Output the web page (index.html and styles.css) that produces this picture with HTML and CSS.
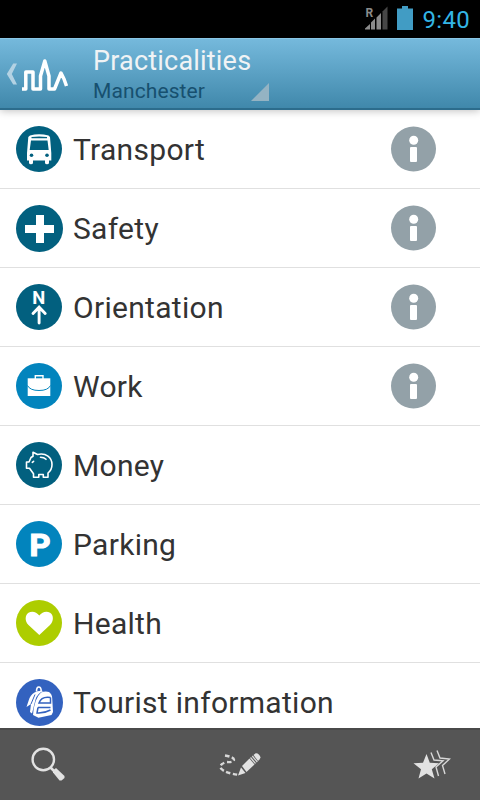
FILE: index.html
```html
<!DOCTYPE html>
<html lang="en">
<head>
    <meta charset="UTF-8">
    <meta name="viewport" content="width=device-width, initial-scale=1.0">
    <title>Practicalities | Manchester</title>
    <link rel="stylesheet" href="styles.css">
</head>
<body>
    <svg width="0" height="0" class="defs">
        <symbol id="info" viewBox="0 0 46 46">
            <circle cx="23.500" cy="23" r="22.500" fill="#93a1a8"/>
            <circle cx="23.700" cy="14.300" r="4.500" fill="#fff"/>
            <rect x="20" y="21" width="7" height="15" rx="1" fill="#fff"/>
        </symbol>
    </svg>

    <div class="status-bar">
        <svg class="signal" width="24" height="24" viewBox="0 0 24 24">
            <text x="0.5" y="11" class="roaming">R</text>
            <path d="M0 23.500v-1l5-4.500v5.500zM6 23.500v-7l4-4v11zM11.500 23.500V11.500l4.500-4.500v16.500z" fill="#8b8b8b"/>
            <path d="M17.500 23.500V5.500l5-5v23z" fill="#464646"/>
        </svg>
        <svg class="battery" width="16" height="24" viewBox="0 0 16 24">
            <path d="M0 2.500h5V0h6v2.500h5V24H0z" fill="#419cc4"/>
        </svg>
        <span class="clock">9:40</span>
    </div>

    <div class="header">
        <svg class="logo" width="64" height="40" viewBox="0 0 64 40">
            <path d="M11 11.500H7.200L.8 22l6.400 10.500H11L5.800 22z" fill="#b3d2e3"/>
            <path d="M16 37h3.800V20h7.200v17h7.500V24L38.800 9 43 24v13h5.500L55 21l3 6 2.500 7" fill="none" stroke="#fff" stroke-width="3.500" stroke-linejoin="round"/>
        </svg>
        <div class="titles">
            <div class="title">Practicalities</div>
            <div class="subtitle">Manchester</div>
        </div>
        <svg class="corner" width="18" height="18" viewBox="0 0 18 18">
            <path d="M18 0v18H0z" fill="#94b3c3"/>
        </svg>
    </div>

    <div class="list">
        <div class="item">
            <svg class="icon" viewBox="0 0 46 46">
                <circle cx="23" cy="23" r="23" fill="#02607f"/>
                <path fill="#fff" fill-rule="evenodd" d="M14 9.500Q23 7 32.500 9.500L34 11l1.300 16v7.500H33v2.200q0 1.500-2 1.500t-2-1.500v-2.200H17v2.200q0 1.500-2 1.500t-2-1.500v-2.200h-2V27l1.300-16zM15.500 11v1.200h15.500V11q-8-1.200-15.500 0zM15 14.500L13.700 24h19L31.500 14.500z"/>
                <circle cx="15.500" cy="29.200" r="1.800" fill="#02607f"/>
                <circle cx="31" cy="29.200" r="1.800" fill="#02607f"/>
            </svg>
            <span class="label">Transport</span>
            <svg class="info"><use href="#info"/></svg>
        </div>
        <div class="item">
            <svg class="icon icon-big" viewBox="0 0 47 47">
                <circle cx="23.500" cy="23.500" r="23.500" fill="#02607f"/>
                <path d="M20 10h8v10h10v8H28v10h-8V28H9v-8h11z" fill="#fff"/>
            </svg>
            <span class="label">Safety</span>
            <svg class="info"><use href="#info"/></svg>
        </div>
        <div class="item">
            <svg class="icon" viewBox="0 0 46 46">
                <circle cx="23" cy="23" r="23" fill="#02607f"/>
                <text x="16.300" y="19.500" class="north" textLength="13" lengthAdjust="spacingAndGlyphs">N</text>
                <path d="M23.100 39V24M17 29.500L23.100 23.200l6.100 6.300" fill="none" stroke="#fff" stroke-width="2.900" stroke-linecap="round"/>
            </svg>
            <span class="label">Orientation</span>
            <svg class="info"><use href="#info"/></svg>
        </div>
        <div class="item">
            <svg class="icon" viewBox="0 0 46 46">
                <circle cx="23" cy="23" r="23" fill="#0284bd"/>
                <path d="M19.300 16v-3.300h7.700V16" fill="none" stroke="#fff" stroke-width="1.400"/>
                <path d="M11.700 15.300h22.600V33H11.700z" fill="#fff"/>
                <path d="M11.500 22.500Q14 27.500 23 27.500T34.500 22.500" fill="none" stroke="#0284bd"/>
            </svg>
            <span class="label">Work</span>
            <svg class="info"><use href="#info"/></svg>
        </div>
        <div class="item">
            <svg class="icon" viewBox="0 0 46 46">
                <circle cx="23" cy="23" r="23" fill="#02607f"/>
                <g fill="none" stroke="#fff" stroke-width="1.600" stroke-linejoin="round" stroke-linecap="round">
                    <path d="M17 10.200l4.500 2.300C30 10.500 36 15.500 36 22.500c0 3.500-1.500 6.500-4 8.500v4.300h-4.700v-2.800h-4.500v2.800h-5.300v-3.500L13.500 26.300h-3V20H13l2-4.500 2-1.200z"/>
                    <path d="M24.500 15.300q3.500 0 5.500 2"/>
                    <path d="M16.300 20.300l1.300-1"/>
                </g>
            </svg>
            <span class="label">Money</span>
        </div>
        <div class="item">
            <svg class="icon" viewBox="0 0 46 46">
                <circle cx="23" cy="23" r="23" fill="#0284bd"/>
                <text x="13.500" y="34.500" class="park" textLength="21" lengthAdjust="spacingAndGlyphs">P</text>
            </svg>
            <span class="label">Parking</span>
        </div>
        <div class="item">
            <svg class="icon" viewBox="0 0 46 46">
                <circle cx="23" cy="23" r="23" fill="#adcd00"/>
                <path d="M23.300 35L12.500 25C8.500 21 9 15 12.500 12.700c3.500-2 8-1 10.800 2.800 2.800-3.800 7.300-4.800 10.800-2.800C37.700 15 38 21 34 25z" fill="#fff"/>
            </svg>
            <span class="label">Health</span>
        </div>
        <div class="item">
            <svg class="icon icon-big" viewBox="0 0 47 47">
                <circle cx="23.500" cy="23.500" r="23.500" fill="#3362bf"/>
                <path d="M20.500 12.500q0-4.500 2.300-4.500t2.400 4" fill="none" stroke="#fff" stroke-width="1.600"/>
                <path d="M18.500 13.500q4-2.500 9-1.500-6 2-8 8.500L16 34.500 14 33l1-8-4.500 3 2-6q1.500-6 6-8.500z" fill="#fff"/>
                <path d="M25 13.500q4-1.500 8-.5 3 2 3.200 6L37 33l-1.500 3-13 2.800-5.500-2.800q1-16 8-22.500z" fill="#fff"/>
                <path d="M34.500 18.500q-9-1.500-11.500 5.500h11.500v-5.500M22 28.500h12.500M22 28.500l-1 5.500q7 .5 13.500-3" fill="none" stroke="#3362bf" stroke-width="1.500"/>
                <path d="M15 25l4-9.500" stroke="#3362bf"/>
            </svg>
            <span class="label">Tourist information</span>
        </div>
    </div>

    <div class="toolbar">
        <svg width="36" height="36" viewBox="0 0 36 36">
            <circle cx="13.300" cy="12.500" r="10.700" fill="none" stroke="#e2e2e2" stroke-width="2.400"/>
            <path d="M20.500 20.500l4 4" stroke="#e2e2e2" stroke-width="2.500"/>
            <path d="M23 23.500l3-2.500 8.500 8v2l-3 2.500h-2L23 25.500z" fill="#e2e2e2"/>
        </svg>
        <svg width="42" height="26" viewBox="0 0 42 26">
            <path d="M6 3.500q9 1.500 9 4.300t-8 2.200Q-1 13 2.500 17t18 6" fill="none" stroke="#d8d8d8" stroke-width="2.400" stroke-dasharray="4.500 2.500"/>
            <path d="M19 23.500L22 15.500l4.500 5.500z" fill="#e2e2e2"/>
            <path d="M23 14l7.500-7.500 5 6-8 7.500z" fill="#e2e2e2"/>
            <path d="M31.500 5.500l5 6M33.300 4l5 6" stroke="#d8d8d8" stroke-width="1.300"/>
            <path d="M34.500 3Q37 0 39.800 2.500t.7 5l-1.500 1.500z" fill="#e2e2e2"/>
        </svg>
        <svg width="38" height="30" viewBox="0 0 38 30">
            <path d="M13.500 4l3.300 8.700 9.200.5-7.200 6L21.500 28.500l-8-5-8 5 2.500-9.300-7.500-6 9.500-.5z" fill="#e2e2e2"/>
            <path d="M18 2.500l3 7.500 9 .8-7 6.200 2.500 9M24 .500l3 7.500 9.500 1-7 6.500 2.500 8.500" fill="none" stroke="#d8d8d8" stroke-width="1.400"/>
        </svg>
    </div>
</body>
</html>
```
FILE: styles.css
```css
body {
    margin: 0;
    height: 800px;
    display: flex;
    flex-direction: column;
    overflow: hidden;
    background: #fff;
    font-family: Roboto, "Noto Sans", sans-serif;
}
.defs {
    position: absolute;
}
.status-bar {
    height: 38px;
    flex: none;
    display: flex;
    align-items: flex-start;
    justify-content: flex-end;
    box-sizing: border-box;
    padding: 6px 10px 0 0;
    background: #000;
}
.signal {
    margin-right: 8px;
}
.battery {
    margin-right: 10px;
}
.roaming {
    font-size: 12px;
    font-weight: bold;
    fill: #8b8b8b;
}
.clock {
    font-size: 24px;
    line-height: 28px;
    letter-spacing: 0.3px;
    color: #33b5e5;
}
.header {
    height: 72px;
    flex: none;
    display: flex;
    box-sizing: border-box;
    border-top: 1px solid #8ac6e5;
    border-bottom: 2px solid #2c6c8c;
    background: linear-gradient(#75b9dc, #4088ab);
    box-shadow: 0 1px 8px rgba(0, 0, 0, 0.25);
    z-index: 1;
}
.logo {
    margin: 13px 0 0 6px;
}
.titles {
    width: 158px;
    margin-left: 23px;
}
.title {
    margin-top: 6px;
    font-size: 27px;
    line-height: 32px;
    letter-spacing: 0.2px;
    white-space: nowrap;
    color: #f0f3f5;
}
.subtitle {
    font-size: 21px;
    line-height: 28px;
    letter-spacing: 0.1px;
    color: #17506f;
}
.corner {
    margin-top: 44px;
}
.list {
    flex: 1;
    min-height: 0;
    overflow: hidden;
}
.item {
    height: 79px;
    display: flex;
    align-items: center;
    box-sizing: border-box;
    padding: 0 44px 0 16px;
    border-bottom: 1px solid #e0e0e0;
}
.icon {
    width: 46px;
    height: 46px;
    flex: none;
}
.icon-big {
    width: 47px;
    height: 47px;
    margin-right: -1px;
}
.label {
    flex: 1;
    margin-left: 11px;
    padding-top: 2px;
    font-size: 30px;
    line-height: 40px;
    letter-spacing: 0.3px;
    color: #333;
}
.info {
    width: 46px;
    height: 46px;
}
.north {
    font-size: 17.5px;
    font-weight: bold;
    fill: #fff;
}
.park {
    font-size: 31px;
    font-weight: bold;
    fill: #fff;
    stroke: #fff;
    stroke-width: 1.2px;
}
.toolbar {
    height: 72px;
    flex: none;
    display: flex;
    align-items: center;
    justify-content: space-between;
    box-sizing: border-box;
    padding: 0 29px 0 30px;
    border-top: 2px solid #4a4a4a;
    background: #555;
}
```
